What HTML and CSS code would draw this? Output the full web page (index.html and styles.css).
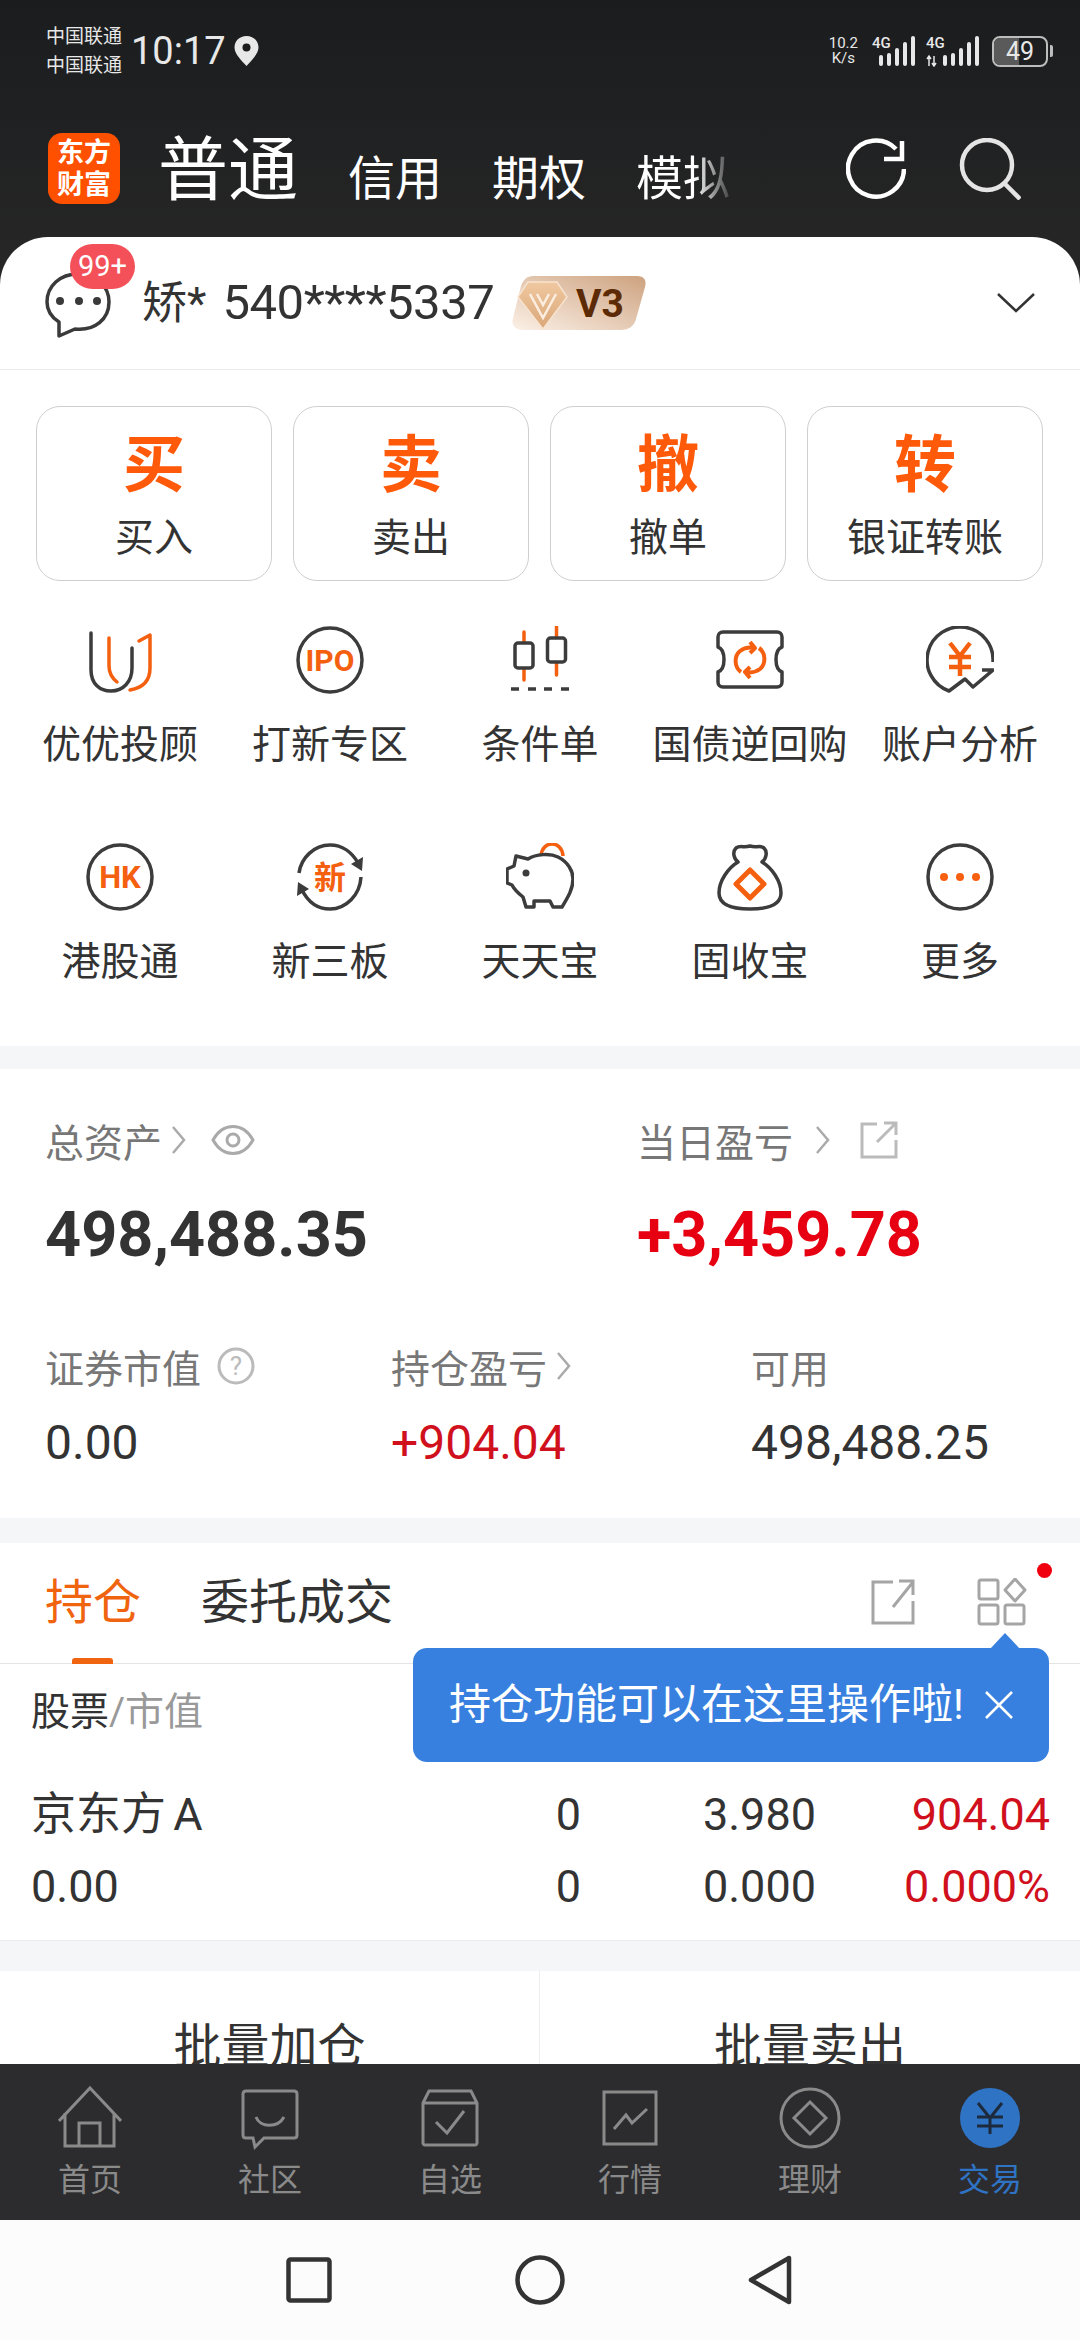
FILE: index.html
```html
<!DOCTYPE html>
<html>
  <head>
    <meta charset="utf-8" />
    <title>交易</title>
    <meta name="viewport" content="width=device-width, initial-scale=1.0" />
    <link rel="stylesheet" href="styles.css">
  </head>
  <body>
    <div class="phone">

      <div class="status">
        <div class="carrier"><span>中国联通</span><span>中国联通</span></div>
        <span class="clock">10:17</span>
        <svg class="pin" width="25" height="30" viewBox="0 0 25 30"><path d="M12.5 0C5.5 0 0.5 5 0.5 11.5C0.5 18 8 25 12.5 30C17 25 24.5 18 24.5 11.5C24.5 5 19.5 0 12.5 0Z" fill="#e8e8e8"/><circle cx="12.5" cy="11.5" r="4" fill="#1c1c1e"/></svg>
        <div class="status-right">
          <div class="speed"><span>10.2</span><span>K/s</span></div>
          <svg class="signal" width="44" height="32" viewBox="0 0 44 32">
            <text x="0" y="13" class="sig-text">4G</text>
            <rect x="7" y="20" width="4" height="11" rx="2"/><rect x="15" y="18" width="4" height="13" rx="2"/><rect x="23" y="13" width="4" height="18" rx="2"/><rect x="31" y="7" width="4" height="24" rx="2"/><rect x="39" y="1" width="4" height="30" rx="2"/>
          </svg>
          <svg class="signal" width="54" height="32" viewBox="0 0 54 32">
            <text x="0" y="13" class="sig-text">4G</text>
            <path d="M3 31V22M1 24L3 21L5 24M8 21V30M6 28L8 31L10 28" stroke="#e8e8e8" stroke-width="1.5" fill="none"/>
            <rect x="17" y="20" width="4" height="11" rx="2"/><rect x="25" y="18" width="4" height="13" rx="2"/><rect x="33" y="13" width="4" height="18" rx="2"/><rect x="41" y="7" width="4" height="24" rx="2"/><rect x="49" y="1" width="4" height="30" rx="2"/>
          </svg>
          <div class="battery"><span class="battery-level">49</span></div>
          <span class="battery-cap"></span>
        </div>
      </div>

      <div class="header">
        <div class="logo"><span>东方</span><span>财富</span></div>
        <div class="modes">
          <span class="mode-on">普通</span>
          <span>信用</span>
          <span>期权</span>
          <span class="mode-fade">模拟</span>
        </div>
        <svg class="head-icon" width="60" height="62" viewBox="0 0 60 62" fill="none" stroke="#fff" stroke-width="4.5"><path d="M50 11A28 28 0 1 0 58 31"/><path d="M56 3V21H38"/></svg>
        <svg class="head-icon" width="62" height="62" viewBox="0 0 62 62" fill="none" stroke="#e4e4e4" stroke-width="4.5"><circle cx="28" cy="27" r="25"/><path d="M45 45L61 61"/></svg>
      </div>

      <div class="main">

        <div class="user">
          <div class="chat">
            <svg width="66" height="66" viewBox="0 0 66 66" fill="none" stroke="#3a3a3a" stroke-width="3.5"><path d="M33 2C15 2 2 14 2 30C2 39 6 45 14 50V64L30 57C50 59 64 47 64 30C64 14 51 2 33 2Z" stroke-linejoin="round"/><circle cx="15" cy="29" r="4" fill="#3a3a3a" stroke="none"/><circle cx="34" cy="29" r="4" fill="#3a3a3a" stroke="none"/><circle cx="52" cy="29" r="4" fill="#3a3a3a" stroke="none"/></svg>
            <span class="badge">99+</span>
          </div>
          <span class="user-name">矫* <span class="user-id">540****5337</span></span>
          <svg class="vip" width="136" height="56" viewBox="0 0 136 56">
            <defs>
              <linearGradient id="vipbg" x1="0" y1="1" x2="1" y2="0"><stop offset="0" stop-color="#fbf0e6"/><stop offset="1" stop-color="#cda27f"/></linearGradient>
              <linearGradient id="gem" x1="0" y1="0" x2="0" y2="1"><stop offset="0" stop-color="#f0c8a0"/><stop offset="1" stop-color="#d9a678"/></linearGradient>
            </defs>
            <path d="M22 1H126C133 1 136 5 134 12L125 44C123 51 118 55 110 55H12C4 55 0 50 2 43L10 11C12 5 16 1 22 1Z" fill="url(#vipbg)"/>
            <path d="M17 7H46L56 22L32 54L7 22Z" fill="url(#gem)" stroke="#f7e3cf" stroke-width="1.5"/>
            <path d="M19 19L32 43L45 19M26 19L32 30L38 19" fill="none" stroke="#fbeee0" stroke-width="2.5"/>
            <text x="65" y="42" class="vip-text">V3</text>
          </svg>
          <svg class="user-arrow" width="38" height="20" viewBox="0 0 38 20" fill="none" stroke="#333" stroke-width="2.5"><path d="M1 1L19 18L37 1"/></svg>
        </div>

        <div class="panel">
          <div class="quick">
            <div class="quick-btn"><b>买</b><span>买入</span></div>
            <div class="quick-btn"><b>卖</b><span>卖出</span></div>
            <div class="quick-btn"><b>撤</b><span>撤单</span></div>
            <div class="quick-btn"><b>转</b><span>银证转账</span></div>
          </div>

          <div class="tools">
            <div class="tool">
              <svg width="68" height="68" viewBox="0 0 68 68" fill="none" stroke-width="3.5" stroke-linecap="round" stroke-linejoin="round">
                <path class="ink" d="M5 7V44C5 58 14 65 25 65C37 65 46 56 46 42V22"/>
                <path class="hot" d="M23 12V40C23 48 26 52 31 56"/>
                <path class="hot" d="M53 15L64 9V42C64 56 56 62 44 64"/>
              </svg>
              <span>优优投顾</span>
            </div>
            <div class="tool">
              <svg width="68" height="68" viewBox="0 0 68 68" fill="none" stroke-width="3.5">
                <circle class="ink" cx="34" cy="34" r="32"/>
                <text x="34" y="45" class="glyph glyph-ipo">IPO</text>
              </svg>
              <span>打新专区</span>
            </div>
            <div class="tool">
              <svg width="68" height="68" viewBox="0 0 68 68" fill="none" stroke-width="3.5" stroke-linecap="round">
                <path class="hot" d="M18 6V54M50.5 1V49"/>
                <rect class="ink body" x="9" y="17" width="18" height="25" rx="3"/>
                <rect class="ink body" x="41.5" y="12" width="18" height="24" rx="3"/>
                <path class="ink" d="M5 63H13M22 63H30M38 63H46M55 63H63" stroke-linecap="butt"/>
              </svg>
              <span>条件单</span>
            </div>
            <div class="tool">
              <svg width="68" height="68" viewBox="0 0 68 68" fill="none" stroke-width="3.5" stroke-linejoin="round">
                <path class="ink" d="M7 6H61C64 6 66 8 66 11V21C58 24 58 43 66 46V56C66 59 64 61 61 61H7C4 61 2 59 2 56V46C10 43 10 24 2 21V11C2 8 4 6 7 6Z"/>
                <path class="hot" stroke-width="4" d="M25 46C18 41 18 30 24 25C28 22 33 21 38 22M34 16L39 22L34 27"/>
                <path class="hot" stroke-width="4" d="M43 22C50 27 50 38 44 43C40 46 35 47 30 46M34 52L29 46L34 41"/>
              </svg>
              <span>国债逆回购</span>
            </div>
            <div class="tool">
              <svg width="68" height="68" viewBox="0 0 68 68" fill="none" stroke-width="3.5" stroke-linejoin="round">
                <path class="ink" d="M67 36A33 33 0 1 0 23 65L39 53L47 61L67 44H56"/>
                <path class="hot" stroke-width="4.5" d="M24 17L34 30L44 17M23 31H45M23 41H45M34 30V50"/>
              </svg>
              <span>账户分析</span>
            </div>
            <div class="tool">
              <svg width="68" height="68" viewBox="0 0 68 68" fill="none" stroke-width="3.5">
                <circle class="ink" cx="34" cy="34" r="32"/>
                <text x="34" y="45" class="glyph glyph-hk">HK</text>
              </svg>
              <span>港股通</span>
            </div>
            <div class="tool">
              <svg width="68" height="68" viewBox="0 0 68 68" fill="none" stroke-width="3.5">
                <path class="ink" d="M3 30C5 15 18 2 34 2C46 2 56 9 62 20"/>
                <path class="ink" d="M65 34C64 52 50 66 34 66C22 66 12 59 6 47"/>
                <path class="ink-fill" d="M55 21L66 28L67 14Z"/>
                <path class="ink-fill" d="M13 46L2 39L1 53Z"/>
                <text x="34" y="46" class="glyph glyph-new">新</text>
              </svg>
              <span>新三板</span>
            </div>
            <div class="tool">
              <svg width="68" height="68" viewBox="0 0 68 68" fill="none" stroke-width="3.5" stroke-linejoin="round">
                <path class="hot" d="M35 13C36 -3 56 -3 57 13"/>
                <path class="ink" d="M10 13L22 16C30 11 44 10 52 14C62 19 67 28 67 36C67 46 62 54 56 64H47L44 58H28V64H20L17 54C12 50 8 46 6 42L1 40V26L8 23Z"/>
                <circle cx="20" cy="30" r="3.5" class="ink-fill"/>
              </svg>
              <span>天天宝</span>
            </div>
            <div class="tool">
              <svg width="68" height="68" viewBox="0 0 68 68" fill="none" stroke-width="3.5" stroke-linejoin="round">
                <path class="ink" d="M20 5C24 2 28 5 34 3C40 5 44 2 48 5C52 9 50 16 46 19C56 25 65 38 65 50C65 62 52 66 34 66C16 66 3 62 3 50C3 38 12 25 22 19C18 16 16 9 20 5Z"/>
                <path class="hot" stroke-width="5" d="M34 27L48 41L34 55L20 41Z"/>
              </svg>
              <span>固收宝</span>
            </div>
            <div class="tool">
              <svg width="68" height="68" viewBox="0 0 68 68" fill="none" stroke-width="3.5">
                <circle class="ink" cx="34" cy="34" r="32"/>
                <circle class="hot-fill" cx="18" cy="34" r="4"/><circle class="hot-fill" cx="34" cy="34" r="4"/><circle class="hot-fill" cx="50" cy="34" r="4"/>
              </svg>
              <span>更多</span>
            </div>
          </div>
        </div>

        <div class="assets">
          <div class="asset-top">
            <div class="asset-cell">
              <div class="asset-label">
                <span>总资产</span>
                <svg class="more" width="15" height="30" viewBox="0 0 15 30"><path d="M2 2L13 15L2 28"/></svg>
                <svg class="eye" width="44" height="30" viewBox="0 0 44 30" fill="none" stroke="#aaa" stroke-width="3"><path d="M2 15C12 -3 32 -3 42 15C32 33 12 33 2 15Z"/><circle cx="22" cy="15" r="6"/></svg>
              </div>
              <div class="big-num">498,488.35</div>
            </div>
            <div class="asset-cell">
              <div class="asset-label">
                <span>当日盈亏</span>
                <svg class="more more-wide" width="15" height="30" viewBox="0 0 15 30"><path d="M2 2L13 15L2 28"/></svg>
                <svg class="share-small" width="38" height="38" viewBox="0 0 38 38" fill="none" stroke="#bbb" stroke-width="3"><path d="M17 3H2V36H36V19"/><path d="M17 21L35 3M24 2H36V14"/></svg>
              </div>
              <div class="big-num up">+3,459.78</div>
            </div>
          </div>
          <div class="asset-low">
            <div class="asset-cell">
              <div class="asset-label">
                <span>证券市值</span>
                <svg class="help" width="38" height="38" viewBox="0 0 38 38"><circle cx="19" cy="19" r="17" fill="none" stroke="#bbb" stroke-width="3"/><text x="19" y="28" class="help-text">?</text></svg>
              </div>
              <div class="mid-num">0.00</div>
            </div>
            <div class="asset-cell">
              <div class="asset-label">
                <span>持仓盈亏</span>
                <svg class="more more-tight" width="15" height="30" viewBox="0 0 15 30"><path d="M2 2L13 15L2 28"/></svg>
              </div>
              <div class="mid-num down-red">+904.04</div>
            </div>
            <div class="asset-cell">
              <div class="asset-label"><span>可用</span></div>
              <div class="mid-num">498,488.25</div>
            </div>
          </div>
        </div>

        <div class="hold">
          <div class="tabs">
            <span class="tab tab-on">持仓</span>
            <span class="tab">委托成交</span>
            <svg class="tab-share" width="44" height="46" viewBox="0 0 44 46" fill="none" stroke="#a5a5a5" stroke-width="3"><path d="M22 3H2V44H42V22"/><path d="M22 28L42 3M28 2H42V16" /></svg>
            <div class="tab-grid">
              <svg width="50" height="48" viewBox="0 0 50 48" fill="none" stroke="#a5a5a5" stroke-width="3"><rect x="2" y="2" width="19" height="19" rx="2"/><path d="M38 1L48 12L38 23L28 12Z" stroke-linejoin="round"/><rect x="2" y="27" width="19" height="19" rx="2"/><rect x="28" y="27" width="19" height="19" rx="2"/></svg>
              <span class="tab-dot"></span>
            </div>
          </div>
          <div class="stock-head"><span>股票</span><span class="stock-head-dim">/市值</span></div>
          <div class="stock-row">
            <span class="stock-name">京东方 A</span>
            <span class="num">0</span>
            <span class="num">3.980</span>
            <span class="num down-red">904.04</span>
          </div>
          <div class="stock-row">
            <span class="stock-name">0.00</span>
            <span class="num">0</span>
            <span class="num">0.000</span>
            <span class="num down-red">0.000%</span>
          </div>
        </div>

        <div class="batch">
          <span>批量加仓</span>
          <span>批量卖出</span>
        </div>
      </div>

      <div class="tip">
        <span class="tip-text">持仓功能可以在这里操作啦!</span>
        <svg width="30" height="30" viewBox="0 0 30 30" fill="none" stroke="#fff" stroke-width="2.5"><path d="M2 2L28 28M28 2L2 28"/></svg>
      </div>

      <div class="nav">
        <div class="nav-item">
          <svg width="64" height="62" viewBox="0 0 64 62"><path d="M1 34L32 1L63 34M7 26V59H56V26M21 59V36H42V59"/></svg>
          <span>首页</span>
        </div>
        <div class="nav-item">
          <svg width="60" height="62" viewBox="0 0 60 62"><path d="M6 4H54C56 4 57 5 57 7V48C57 50 56 51 54 51H24L15 60L13 51H6C4 51 3 50 3 48V7C3 5 4 4 6 4Z"/><path d="M16 30C20 41 38 41 44 30"/></svg>
          <span>社区</span>
        </div>
        <div class="nav-item">
          <svg width="60" height="62" viewBox="0 0 60 62"><path d="M3 16L9 4H51L57 16V56C57 57 56 58 55 58H5C4 58 3 57 3 56ZM3 16H57"/><path d="M16 35L27 46L44 24"/></svg>
          <span>自选</span>
        </div>
        <div class="nav-item">
          <svg width="60" height="62" viewBox="0 0 60 62"><path d="M4 5H56V57H4Z"/><path d="M14 42L26 28L32 36L47 22"/></svg>
          <span>行情</span>
        </div>
        <div class="nav-item">
          <svg width="62" height="64" viewBox="0 0 62 64"><circle cx="31" cy="32" r="29"/><path d="M31 16L47 32L31 48L15 32Z"/></svg>
          <span>理财</span>
        </div>
        <div class="nav-item nav-on">
          <svg width="62" height="64" viewBox="0 0 62 64"><circle class="nav-disc" cx="31" cy="32" r="30"/><path class="nav-yen" d="M19 17L31 32L43 17M18 31H44M18 40H44M31 31V48"/></svg>
          <span>交易</span>
        </div>
      </div>

      <div class="sysbar">
        <svg width="46" height="46" viewBox="0 0 46 46" fill="none" stroke="#333" stroke-width="4.5"><rect x="2.5" y="2.5" width="41" height="41" rx="2"/></svg>
        <svg width="50" height="50" viewBox="0 0 50 50" fill="none" stroke="#333" stroke-width="4.5"><circle cx="25" cy="25" r="22.5"/></svg>
        <svg width="44" height="50" viewBox="0 0 44 50" fill="none" stroke="#333" stroke-width="4.5" stroke-linejoin="round"><path d="M41 3V47L3 25Z"/></svg>
      </div>
    </div>
  </body>
</html>
```

FILE: styles.css
```css
* {
  box-sizing: border-box;
}

body {
  margin: 0;
  background: #fff;
  font-family: Roboto, "Noto Sans CJK SC", sans-serif;
  color: #333;
}

.phone {
  position: relative;
  width: 1080px;
  height: 2340px;
  display: flex;
  flex-direction: column;
  overflow: hidden;
  background: linear-gradient(#1b1c1e, #282828) 0 0 / 100% 300px no-repeat, #f5f6f8;
}

/* status bar */
.status {
  height: 102px;
  flex: none;
  display: flex;
  align-items: center;
  padding: 0 27px 0 46px;
  color: #e8e8e8;
}
.carrier {
  display: flex;
  flex-direction: column;
  font-size: 19px;
  line-height: 29px;
  width: 85px;
}
.clock {
  font-size: 38px;
  line-height: 1;
  width: 103px;
}
.status-right {
  margin-left: auto;
  display: flex;
  align-items: center;
}
.speed {
  display: flex;
  flex-direction: column;
  align-items: center;
  font-size: 15px;
  line-height: 15px;
  margin-right: 14px;
}
.signal {
  fill: #e8e8e8;
  margin-right: 10px;
}
.sig-text {
  font-size: 15px;
  font-weight: 500;
}
.battery {
  width: 56px;
  height: 31px;
  border: 2px solid #bdbdbd;
  border-radius: 8px;
  overflow: hidden;
  margin-left: 2px;
}
.battery-level {
  display: block;
  width: 100%;
  height: 100%;
  font-size: 25px;
  line-height: 27px;
  text-align: center;
  background: linear-gradient(90deg, #5a5a5a 49%, transparent 49%);
}
.battery-cap {
  width: 3px;
  height: 12px;
  margin-left: 2px;
  background: #bdbdbd;
  border-radius: 0 2px 2px 0;
}

/* dark header */
.header {
  height: 135px;
  flex: none;
  display: flex;
  align-items: center;
  padding: 0 59px 2px 48px;
}
.logo {
  width: 72px;
  height: 71px;
  background: #ff5000;
  border-radius: 14px;
  color: #fff;
  font-size: 27px;
  font-weight: 700;
  line-height: 32px;
  display: flex;
  flex-direction: column;
  align-items: center;
  justify-content: center;
}
.modes {
  margin-left: 38px;
  margin-top: 13px;
  display: flex;
  align-items: baseline;
  gap: 50px;
  font-size: 47px;
  line-height: 70px;
  color: #fff;
}
.mode-on {
  font-size: 70px;
}
.mode-fade {
  background: linear-gradient(90deg, #fff 62%, rgba(255, 255, 255, 0.15) 100%);
  -webkit-background-clip: text;
  background-clip: text;
  color: transparent;
}
.head-icon {
  margin-left: 53px;
}
.head-icon:first-of-type {
  margin-left: auto;
}

/* scrolling part */
.main {
  flex: 1;
  min-height: 0;
  overflow: hidden;
}

.user {
  height: 133px;
  display: flex;
  align-items: center;
  padding: 0 45px;
  background: #fff;
  border-radius: 48px 48px 0 0;
  border-bottom: 1px solid #ececec;
}
.chat {
  position: relative;
  width: 66px;
  height: 66px;
  margin-top: 4px;
}
.badge {
  position: absolute;
  left: 25px;
  top: -28px;
  width: 65px;
  height: 45px;
  border-radius: 23px;
  background: #f4505a;
  color: #fff;
  font-size: 29px;
  line-height: 45px;
  text-align: center;
}
.user-name {
  margin-left: 31px;
  font-size: 45px;
  line-height: 60px;
  white-space: nowrap;
}
.user-id {
  margin-left: 5px;
  font-size: 49px;
  letter-spacing: -0.5px;
}
.vip {
  margin-left: 17px;
}
.vip-text {
  font-size: 39px;
  font-weight: 700;
  fill: #5c2a05;
}
.user-arrow {
  margin-left: auto;
}

.panel {
  background: #fff;
  padding: 36px 0 59px;
}
.quick {
  display: grid;
  grid-template-columns: repeat(4, 236px);
  gap: 21px;
  padding: 0 36px;
}
.quick-btn {
  height: 175px;
  border: 1.5px solid #cfcfcf;
  border-radius: 24px;
  display: flex;
  flex-direction: column;
  align-items: center;
}
.quick-btn b {
  margin-top: 14px;
  font-size: 62px;
  line-height: 90px;
  font-weight: 700;
  color: #ff5a0a;
}
.quick-btn span {
  margin-top: 2px;
  font-size: 39px;
  line-height: 50px;
}

.tools {
  margin-top: 45px;
  padding: 0 15px;
  display: grid;
  grid-template-columns: repeat(5, 210px);
  row-gap: 73px;
}
.tool {
  display: flex;
  flex-direction: column;
  align-items: center;
  gap: 26px;
}
.tool span {
  font-size: 39px;
  line-height: 50px;
  white-space: nowrap;
}
.ink {
  stroke: #3c3c3c;
}
.hot {
  stroke: #f4600f;
}
.ink-fill {
  fill: #3c3c3c;
}
.hot-fill {
  fill: #f4600f;
}
.body {
  fill: #fff;
}
.glyph {
  fill: #f4600f;
  font-weight: 700;
  text-anchor: middle;
}
.glyph-ipo {
  font-size: 30px;
}
.glyph-hk {
  font-size: 31px;
}
.glyph-new {
  font-size: 32px;
}

/* assets */
.assets {
  margin-top: 23px;
  height: 449px;
  background: #fff;
  padding: 46px 0 0 45px;
}
.asset-top {
  display: grid;
  grid-template-columns: 592px 1fr;
}
.asset-low {
  margin-top: 71px;
  display: grid;
  grid-template-columns: 346px 360px 1fr;
}
.asset-label {
  display: flex;
  align-items: center;
  height: 50px;
  font-size: 39px;
  color: #777;
}
.more {
  margin-left: 9px;
  fill: none;
  stroke: #aaa;
  stroke-width: 2.5;
}
.more-wide {
  margin-left: 22px;
}
.eye {
  margin-left: 25px;
}
.share-small {
  margin-left: 30px;
}
.help {
  margin-left: 16px;
}
.help-text {
  font-size: 26px;
  fill: #bbb;
  text-anchor: middle;
}
.big-num {
  margin-top: 35px;
  font-size: 63px;
  line-height: 70px;
  font-weight: 700;
  color: #333;
}
.mid-num {
  margin-top: 22px;
  font-size: 48px;
  line-height: 60px;
}
.up {
  color: #e60012;
}
.down-red {
  color: #d0101c;
}

/* holdings */
.hold {
  margin-top: 25px;
  background: #fff;
  height: 398px;
  border-bottom: 1px solid #ececec;
}
.tabs {
  height: 121px;
  display: flex;
  align-items: center;
  padding: 0 53px 0 45px;
  border-bottom: 1.5px solid #e4e4e4;
}
.tab {
  position: relative;
  height: 121px;
  font-size: 48px;
  line-height: 120px;
  margin-right: 60px;
}
.tab-on {
  color: #f0640f;
}
.tab-on::after {
  content: "";
  position: absolute;
  left: 27px;
  bottom: 0;
  width: 41px;
  height: 6px;
  border-radius: 3px 3px 0 0;
  background: #f0640f;
}
.tab-share {
  margin-left: auto;
  margin-bottom: 3px;
}
.tab-grid {
  position: relative;
  margin-left: 62px;
  margin-bottom: 3px;
  height: 48px;
}
.tab-dot {
  position: absolute;
  left: 60px;
  top: -15px;
  width: 15px;
  height: 15px;
  border-radius: 50%;
  background: #f0000f;
}
.stock-head {
  height: 96px;
  margin-bottom: 19px;
  padding-left: 31px;
  font-size: 39px;
  line-height: 96px;
}
.stock-head-dim {
  color: #999;
}
.stock-row {
  height: 72px;
  padding: 0 31px;
  display: grid;
  grid-template-columns: 430px 120px 235px 234px;
  font-size: 45px;
  line-height: 72px;
}
.stock-name {
  word-spacing: -4px;
}
.num {
  text-align: right;
}

.batch {
  margin-top: 30px;
  height: 150px;
  background: #fff;
  display: grid;
  grid-template-columns: 1fr 1fr;
  font-size: 48px;
  line-height: 152px;
  text-align: center;
}
.batch span:first-child {
  border-right: 1px solid #eee;
}

/* tooltip over the holdings */
.tip {
  position: absolute;
  left: 413px;
  top: 1648px;
  width: 636px;
  height: 114px;
  border-radius: 14px;
  background: #3880e0;
  color: #fff;
  font-size: 42px;
  display: flex;
  align-items: center;
  justify-content: space-between;
  padding: 0 35px 0 36px;
}
.tip-text {
  margin-bottom: 9px;
}
.tip::before {
  content: "";
  position: absolute;
  right: 29px;
  top: -15px;
  border-left: 15px solid transparent;
  border-right: 15px solid transparent;
  border-bottom: 16px solid #3880e0;
}

/* bottom tabs */
.nav {
  height: 156px;
  flex: none;
  background: #2c2c2e;
  display: grid;
  grid-template-columns: repeat(6, 1fr);
  padding-top: 22px;
}
.nav-item {
  display: flex;
  flex-direction: column;
  align-items: center;
  color: #8a8a8a;
  font-size: 32px;
  line-height: 44px;
}
.nav-item svg {
  height: 64px;
  margin-bottom: 8px;
  fill: none;
  stroke: #8a8a8a;
  stroke-width: 3;
}
.nav-on {
  color: #2f73c4;
}
.nav-item .nav-disc {
  fill: #2f73c4;
  stroke: none;
}
.nav-item .nav-yen {
  stroke: #1d2a3c;
}

.sysbar {
  height: 120px;
  flex: none;
  background: #fcfcfc;
  display: flex;
  align-items: center;
  gap: 183px;
  padding-left: 286px;
}
```
